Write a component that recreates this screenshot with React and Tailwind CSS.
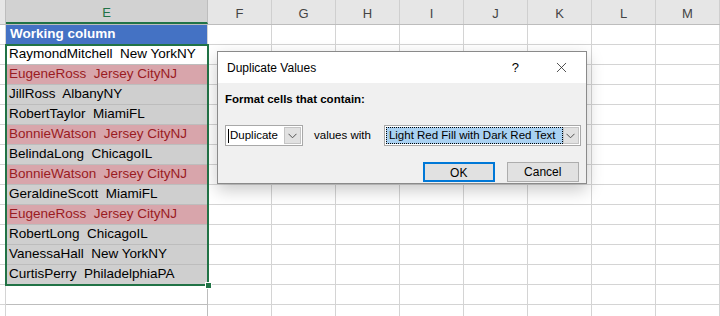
import { X } from 'lucide-react'

const rows = [
  { text: 'RaymondMitchell  New YorkNY', kind: 'active' },
  { text: 'EugeneRoss  Jersey CityNJ', kind: 'dup' },
  { text: 'JillRoss  AlbanyNY', kind: 'sel' },
  { text: 'RobertTaylor  MiamiFL', kind: 'sel' },
  { text: 'BonnieWatson  Jersey CityNJ', kind: 'dup' },
  { text: 'BelindaLong  ChicagoIL', kind: 'sel' },
  { text: 'BonnieWatson  Jersey CityNJ', kind: 'dup' },
  { text: 'GeraldineScott  MiamiFL', kind: 'sel' },
  { text: 'EugeneRoss  Jersey CityNJ', kind: 'dup' },
  { text: 'RobertLong  ChicagoIL', kind: 'sel' },
  { text: 'VanessaHall  New YorkNY', kind: 'sel' },
  { text: 'CurtisPerry  PhiladelphiaPA', kind: 'sel' },
  { text: '', kind: 'empty' },
  { text: '', kind: 'empty' },
]

const cols = ['F', 'G', 'H', 'I', 'J', 'K', 'L', 'M']

const cellFill = {
  active: 'bg-white text-black',
  dup: 'bg-[#d8a5ab] text-[#9a1b22]',
  sel: 'bg-[#cfcfcf] text-black',
  empty: 'bg-white',
}

function Chevron() {
  return (
    <svg width="9" height="6" viewBox="0 0 9 6" fill="none">
      <path d="M0.5 0.8 L4.5 4.8 L8.5 0.8" stroke="#505050" strokeWidth="1" />
    </svg>
  )
}

function DuplicateDialog() {
  return (
    <div className="absolute left-[217px] top-[51px] w-[370px] h-[133px] border border-[#8a8a8a] bg-[#f0f0f0] shadow-[0_6px_16px_rgba(0,0,0,0.22)] font-['Liberation_Sans',sans-serif] text-[11.5px] text-black">
      <div className="flex items-center h-[31px] bg-white pl-[9px] pr-[16px]">
        <span className="text-[12px]">Duplicate Values</span>
        <span className="ml-auto mr-[34px] text-[13px]">?</span>
        <X size={17} strokeWidth={1.1} className="text-[#222]" />
      </div>
      <div className="px-[7px] pt-[8px]">
        <p className="font-bold leading-[16px]">Format cells that contain:</p>
        <div className="flex items-center mt-[18px] h-[21px]">
          <div className="flex shrink-0 items-center w-[78px] h-[21px] bg-white border border-[#a8a8a8] pl-[2px] pr-[1px]">
            <span className="w-px h-[14px] bg-black mr-[1px]" />
            <span>Duplicate</span>
            <span className="ml-auto flex items-center justify-center w-[17px] h-[17px] bg-[#e1e1e1] border border-[#c4c4c4]">
              <Chevron />
            </span>
          </div>
          <span className="ml-[11px] whitespace-nowrap shrink-0">values with</span>
          <div className="flex shrink-0 items-center ml-[13px] w-[197px] h-[21px] bg-white border border-[#a8a8a8] pl-[1px] pr-[1px]">
            <span className="flex items-center h-[17px] w-[177px] bg-[#a9d1f2] border border-dotted border-black pl-[2px] whitespace-nowrap overflow-hidden">
              Light Red Fill with Dark Red Text
            </span>
            <span className="ml-auto flex items-center justify-center w-[16px] h-[17px] bg-[#e1e1e1] border border-[#c4c4c4]">
              <Chevron />
            </span>
          </div>
        </div>
        <div className="flex mt-[16px] pl-[198px] gap-[12px]">
          <button className="w-[72px] h-[20px] bg-[#e1e1e1] border-2 border-[#0078d7] text-[12px]">OK</button>
          <button className="w-[73px] h-[20px] bg-[#e1e1e1] border border-[#adadad] text-[12px]">Cancel</button>
        </div>
      </div>
    </div>
  )
}

export default function App() {
  return (
    <div className="relative w-[720px] h-[316px] overflow-hidden bg-white font-['Liberation_Sans',sans-serif] text-[13.5px]">
      {/* column headers */}
      <div className="flex h-[25px] bg-[#e6e6e6] border-b border-[#bdbdbd] text-[#444] text-[13px]">
        <div className="w-[6px] border-r border-[#bdbdbd]" />
        <div className="w-[202px] flex items-center justify-center pt-[4px] bg-[#d2d2d2] text-[#217346] border-r border-[#bdbdbd] border-b-2 border-b-[#217346]">
          E
        </div>
        {cols.map((c) => (
          <div key={c} className="w-16 flex items-center justify-center pt-[4px] border-r border-[#cfcfcf]">
            {c}
          </div>
        ))}
      </div>

      {/* row 1 */}
      <div className="flex h-[20px]">
        <div className="w-[6px] border-r border-[#d4d4d4] border-b" />
        <div className="w-[202px] bg-[#4472c4] text-white font-bold flex items-center pl-[4px] border-r border-b border-[#d4d4d4]">
          Working column
        </div>
        {cols.map((c) => (
          <div key={c} className="w-16 border-r border-b border-[#d4d4d4]" />
        ))}
      </div>

      {rows.map((r, i) => (
        <div key={i} className="flex h-[20px]">
          <div className="w-[6px] border-r border-b border-[#d4d4d4]" />
          <div className={`w-[202px] flex items-center pl-[3px] whitespace-pre border-r border-b border-[#bdbdbd] ${cellFill[r.kind]}`}>
            {r.text}
          </div>
          {cols.map((c) => (
            <div key={c} className="w-16 border-r border-b border-[#d4d4d4]" />
          ))}
        </div>
      ))}

      {/* selection outline and fill handle */}
      <div className="absolute left-[5px] top-[44px] w-[204px] h-[242px] border-2 border-[#217346] pointer-events-none" />
      <div className="absolute left-[205px] top-[282px] w-[7px] h-[7px] bg-[#217346] border border-white" />

      <DuplicateDialog />
    </div>
  )
}
